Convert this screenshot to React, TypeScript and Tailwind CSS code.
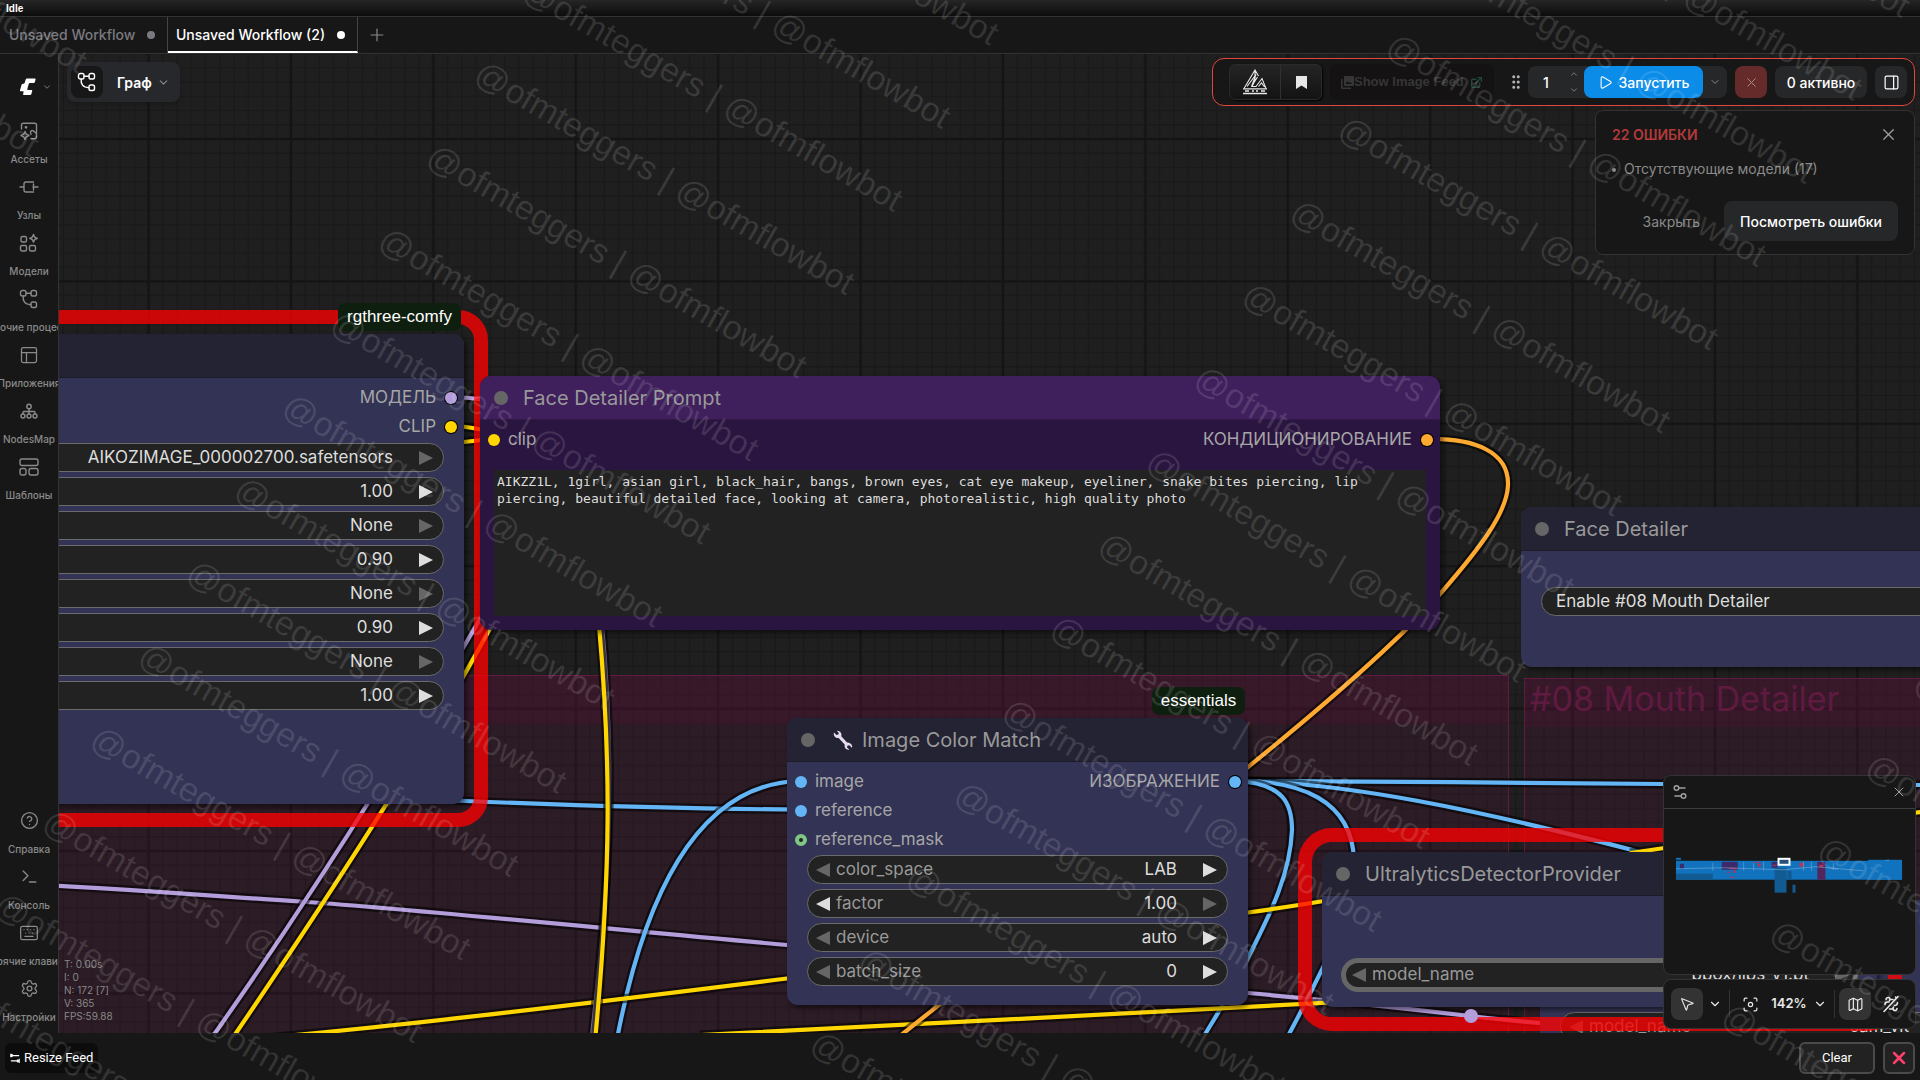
import React from "react";
import {
  ChevronDown,
  ChevronUp,
  X,
  Plus,
  Play,
  PanelsTopLeft,
  CircleQuestionMark,
  Terminal,
  Keyboard,
  Settings,
  PanelRight,
  Focus,
  Map as MapIcon,
  MousePointer2,
  GripVertical,
  ExternalLink,
} from "lucide-react";

type Side = "left" | "right";

const line = {
  fill: "none",
  stroke: "currentColor",
  strokeWidth: 1.4,
  strokeLinecap: "round" as const,
  strokeLinejoin: "round" as const,
};

/* ---------- icons ---------- */

const WorkflowIcon = () => (
  <svg viewBox="0 0 20 20" className="size-5" {...line}>
    <rect x="1.500" y="1.500" width="5.500" height="5.500" rx="1.800" />
    <rect x="12" y="1.500" width="5.500" height="5.500" rx="1.800" />
    <rect x="12" y="13" width="5.500" height="5.500" rx="1.800" />
    <path d="M7 4.200h5M4.200 7c-.6 5 1.500 8.500 7.800 8.700" />
  </svg>
);

const AssetsIcon = () => (
  <svg viewBox="0 0 20 20" className="size-5" {...line}>
    <path d="M2.500 8V4a1.800 1.800 0 0 1 1.800-1.800h11.400A1.800 1.800 0 0 1 17.500 4v12a1.800 1.800 0 0 1-1.800 1.800H12" />
    <path d="M12 13.500c-1.500-2.800.5-4.800 2.400-3.600l3 2.600" />
    <path d="M6 10.500l1.300 2.700L10 14.500l-2.700 1.300L6 18.500l-1.300-2.700L2 14.500l2.700-1.300z" />
    <circle cx="7" cy="6.300" r=".7" />
  </svg>
);

const NodesIcon = () => (
  <svg viewBox="0 0 20 20" className="size-5" {...line}>
    <path d="M1 10h4M14 10h5M5 10V7a2 2 0 0 1 2-2h7.500M5 10v3a2 2 0 0 0 2 2h7.500M14.500 7v6" />
  </svg>
);

const ModelsIcon = () => (
  <svg viewBox="0 0 20 20" className="size-5" {...line}>
    <rect x="2" y="3.500" width="5.500" height="5.500" rx="1.500" />
    <rect x="1.500" y="12.500" width="6" height="5.500" rx="1.500" />
    <rect x="10.500" y="12.500" width="6" height="5.500" rx="1.500" />
    <path d="M14.500 1.500l1.200 2.600 2.600 1.200-2.600 1.200-1.200 2.600-1.200-2.600-2.600-1.200 2.600-1.200z" />
  </svg>
);

const SitemapIcon = () => (
  <svg viewBox="0 0 20 20" className="size-5" {...line}>
    <circle cx="10" cy="5.500" r="2.200" />
    <circle cx="4" cy="15" r="2" />
    <circle cx="10" cy="15" r="2" />
    <circle cx="16" cy="15" r="2" />
    <path d="M10 7.700V13M4 13v-1.500a1 1 0 0 1 1-1h10a1 1 0 0 1 1 1V13" />
  </svg>
);

const TemplatesIcon = () => (
  <svg viewBox="0 0 20 20" className="size-5" {...line}>
    <rect x="1" y="2" width="18" height="6.500" rx="2" />
    <rect x="1" y="11.500" width="6" height="6.500" rx="2" />
    <rect x="10" y="11.500" width="9" height="6.500" rx="2" />
  </svg>
);

const LinkOffIcon = () => (
  <svg viewBox="0 0 20 20" className="size-5" {...line} strokeWidth={1.6}>
    <path d="M3 17.500L17 2.500" />
    <path d="M9 5.500h3M14.500 3l.4.400M5 5.500a2 2 0 1 1 3.500 1.300M4 10.500c0-1.800 1-2.500 2.500-2.500H8M16 14.500a2 2 0 1 1-3.500-1.300M16.500 8.500c0 2-1 3-3 3M12 15H8.500" />
  </svg>
);

const SlidersIcon = () => (
  <svg viewBox="0 0 16 16" className="size-4" {...line}>
    <circle cx="4.500" cy="4" r="2.300" />
    <circle cx="11.500" cy="12" r="2.300" />
    <path d="M7 4h6M9 12H3" />
  </svg>
);

const ImagesIcon = () => (
  <svg viewBox="0 0 13 13" className="size-[13px] shrink-0" fill="currentColor">
    <path d="M4 0h8q1 0 1 1v8q0 1-1 1H4q-1 0-1-1V1q0-1 1-1z" />
    <path d="M1.500 3v7.500q0 1 1 1H10V13H1.500Q0 13 0 11.500V3z" />
    <path d="M4.500 8l2-3 1.500 2 1-1 2 2z" fill="#141213" />
  </svg>
);

const ComfyLogo = () => (
  <svg viewBox="0 0 20 20" className="size-5" fill="#fff">
    <path d="M8.200 1.500h8.600q1 0 .8 1l-.7 2.500q-.3 1-1.300 1h-3.800q-.8 0-1 .8l-1.500 5.300q-.2.900.7.900h3.500q1 0 .7 1l-.8 3q-.3 1-1.300 1H5.800q-1 0-.7-1l.5-2q.2-.8-.6-.8H2.700q-1 0-.7-1l1.600-5.500q.3-1 1.300-1h.8q.7 0 .9-.7l1.100-3.500q.3-1 1.300-1z" />
  </svg>
);

const RgthreeLogo = () => (
  <svg viewBox="0 0 24 26" className="h-[26px] w-6" fill="none" stroke="#e8e8e8" strokeWidth="1.100">
    <path d="M1 19.500L12 1l3.500 6M4 17.500l9-12-4.500 12 6-9.500M12 2.500v9l-3 6h4l6-8 4 10M15.500 17.500l3-3.500 3 4" />
    <path d="M0 19.800h24M0 24.500h24" strokeWidth="1.300" />
    <path d="M2 22h4M9 22h2M13 22h2M18 22h4" strokeWidth="1.300" />
  </svg>
);

const WrenchIcon = () => (
  <svg viewBox="0 0 20 20" className="size-5" fill="#e6dcf0">
    <path d="M3.800.8c1.900-.3 4.600 1.200 4.700 3.900l-.2 1.500 5.800 6.300c1.900-.3 4.500 1 5 3.300.2.900.1 1.500-.2 2l-2.600-2.500-1.900.4-.4 1.800 2.400 2.100c-2 .4-4.400-.8-4.800-3.200l.1-1.800-6.100-6.500C3.500 8.300 1.300 7 .8 4.700c-.2-.9 0-1.600.2-2.100l2.500 2.300 1.900-.5.300-1.700z" />
  </svg>
);

/* ---------- canvas ---------- */

const YELLOW = "#ffd600";
const BLUE = "#64b5f6";
const PURPLE = "#b39ddb";
const ORANGE = "#ffa931";

const links: { d: string; color: string }[] = [
  { d: "M-60 880C60 884 200 895 300 901.500S640 932 787 945S1150 984 1248 993S1420 1010 1470 1016S1600 1028 1680 1032", color: PURPLE },
  { d: "M455 800.500C560 805 680 809 800 809.500", color: BLUE },
  { d: "M800 781C715 783 652 860 618 1034", color: BLUE },
  { d: "M1235 781C1400 781 1500 783 1663 784S1850 785 1930 785", color: BLUE },
  { d: "M1235 781C1340 781 1480 810 1640 852", color: BLUE },
  { d: "M1235 781C1300 780 1352 800 1354 860", color: BLUE },
  { d: "M1235 781C1285 783 1292 805 1292 830C1290 880 1264 925 1246 962S1222 1006 1204 1036", color: BLUE },
  { d: "M1345 920C1325 965 1310 995 1288 1036", color: BLUE },
  { d: "M1630 853C1720 840 1850 820 1930 811", color: YELLOW },
  { d: "M1910 912L1930 922", color: BLUE },
  { d: "M250 1039C400 1027 640 997 787 978.500L1248 912.500C1280 908 1300 905 1330 900", color: YELLOW },
  { d: "M700 1035C900 1026 1140 1012 1340 1002", color: YELLOW },
  { d: "M450 397C470 397 480 399 500 402", color: PURPLE },
  { d: "M450 425C470 427 480 429 500 433", color: YELLOW },
  { d: "M450 444C470 441 480 440 494 439", color: YELLOW },
  { d: "M602 625C614 760 612 860 592 1036", color: "#7d7090" },
  { d: "M599 625C611 760 611 870 595.500 1036", color: YELLOW },
  { d: "M500 584C440 690 330 870 213 1036", color: PURPLE },
  { d: "M510 590C450 710 340 880 234 1036", color: YELLOW },
  { d: "M1427 439C1475 438 1509 452 1508 485C1507 513 1480 548 1440 594C1390 650 1300 725 1248 767S1000 955 900 1036", color: ORANGE },
];

const CanvasGrid = () => (
  <svg className="absolute inset-0 size-full" aria-hidden="true">
    <defs>
      <pattern id="grid" x="148.600" y="139" width="142.400" height="142.400" patternUnits="userSpaceOnUse">
        {Array.from({ length: 9 }, (_, i) => (i + 1) * 14.24).map((p) => (
          <path key={p} d={`M${p} 0V142.400M0 ${p}H142.400`} stroke="#191919" strokeWidth="1.400" />
        ))}
        <path d="M0 0V142.400M142.400 0V142.400M0 0H142.400M0 142.400H142.400" stroke="#141414" strokeWidth="2.600" />
      </pattern>
    </defs>
    <rect width="100%" height="100%" fill="#1f1f1f" />
    <rect width="100%" height="100%" fill="url(#grid)" />
  </svg>
);

const LinkLayer = () => (
  <svg className="absolute inset-0 size-full" aria-hidden="true">
    {links.map((l) => (
      <g key={l.d} fill="none">
        <path d={l.d} stroke="#000" strokeOpacity=".55" strokeWidth="9" />
        <path d={l.d} stroke={l.color} strokeWidth="4.200" />
      </g>
    ))}
  </svg>
);

const Arrow = ({ side, dim, label }: { side: Side; dim?: boolean; label: string }) => (
  <button type="button" aria-label={label} className="shrink-0">
    <svg viewBox="0 0 14 14" className={dim ? "size-[14px] fill-[#666]" : "size-[14px] fill-[#ddd]"}>
      <path d={side === "left" ? "M14 0v14L0 7z" : "M0 0v14l14-7z"} />
    </svg>
  </button>
);

const Widget = ({
  name,
  value,
  dimLeft,
  dimRight,
  thick,
}: {
  name?: string;
  value: string;
  dimLeft?: boolean;
  dimRight?: boolean;
  thick?: boolean;
}) => (
  <div
    className={
      thick
        ? "flex h-[34px] items-center rounded-full border-[5px] border-[#666] bg-[#222] pr-1 pl-[6px]"
        : "flex h-[29px] items-center rounded-full border border-[#6b6b6b] bg-[#222] pr-[10px] pl-2"
    }
  >
    <Arrow side="left" dim={dimLeft} label={`Previous ${name ?? "value"}`} />
    <label className="flex min-w-0 flex-1 items-center pr-[26px] pl-[6px]">
      <span className="text-[#999]">{name}</span>
      <input
        aria-label={name ?? "lora"}
        defaultValue={value}
        className="w-0 min-w-0 flex-1 bg-transparent text-right text-[17px] text-[#ddd] outline-none"
      />
    </label>
    <Arrow side="right" dim={dimRight} label={`Next ${name ?? "value"}`} />
  </div>
);

const SlotRow = ({
  input,
  output,
  inColor,
  outColor,
}: {
  input?: string;
  output?: string;
  inColor?: string;
  outColor?: string;
}) => (
  <div className="flex h-7 items-center justify-between pr-[7px] pl-2 text-[#a6a6a6]">
    <span className="flex items-center gap-2">
      {input && <i className={`size-3 rounded-full ${inColor}`} />}
      {input}
    </span>
    {output && (
      <span className="flex items-center gap-[9px]">
        {output}
        <i className={`size-3 rounded-full ring-1 ring-black ${outColor}`} />
      </span>
    )}
  </div>
);

const NodeTitle = ({ children, className }: { children?: React.ReactNode; className: string }) => (
  <h2 className={`flex h-11 shrink-0 items-center gap-[15px] border-b border-black/20 pl-[14px] text-[20px] text-[#999] ${className}`}>
    <i className="size-[14px] rounded-full bg-[#666]" />
    {children}
  </h2>
);

const NODE = "absolute flex flex-col overflow-hidden rounded-[11px] text-[17px] shadow-[3px_3px_5px_rgba(0,0,0,0.5)]";

const loras: [string, boolean][] = [
  ["AIKOZIMAGE_000002700.safetensors", true],
  ["1.00", false],
  ["None", true],
  ["0.90", false],
  ["None", true],
  ["0.90", false],
  ["None", true],
  ["1.00", false],
];

const Badge = ({ children, className }: { children: string; className: string }) => (
  <span
    className={`absolute flex h-7 items-center justify-center rounded-[7px] bg-[#0f1f0f] font-['Liberation_Sans',sans-serif] text-[17px] whitespace-nowrap text-white ${className}`}
  >
    {children}
  </span>
);

const GraphCanvas = () => (
  <section aria-label="Graph" className="absolute inset-0 overflow-hidden">
    <CanvasGrid />

    <div className="absolute top-[675px] left-[-40px] h-[500px] w-[1549px] border border-[#641a40] bg-[#6a1040]/18">
      <div className="h-12 bg-[#6a1040]/20" />
    </div>
    <div className="absolute top-[678px] left-[1524px] h-[500px] w-[800px] border border-[#641a40] bg-[#6a1040]/18">
      <h3 className="h-12 bg-[#6a1040]/20 pl-[5px] text-[34px] leading-10 text-[#5f1a40]">#08 Mouth Detailer</h3>
    </div>

    <LinkLayer />

    <article className={`${NODE} top-[334px] left-[-200px] h-[470px] w-[664px] bg-[#333355]`}>
      <NodeTitle className="bg-[#242333]" />
      <div className="flex flex-col gap-px pt-[6px]">
        <SlotRow output="МОДЕЛЬ" outColor="bg-[#b39ddb]" />
        <SlotRow output="CLIP" outColor="bg-[#ffd600]" />
      </div>
      <div className="mx-5 mt-[2px] flex flex-col gap-[5px]">
        {loras.map(([v, dim], i) => (
          <Widget key={i} value={v} dimRight={dim} />
        ))}
      </div>
    </article>
    <div className="absolute top-[310px] left-[-240px] h-[517px] w-[728px] rounded-[30px] border-[14px] border-[#ff0000]/77" />
    <Badge className="top-[303px] left-[338px] w-[123px]">rgthree-comfy</Badge>

    <article className={`${NODE} top-[376px] left-[480px] h-[254px] w-[960px] bg-[#2a1540]`}>
      <NodeTitle className="bg-[#3f1f5c]">Face Detailer Prompt</NodeTitle>
      <div className="pt-[6px]">
        <SlotRow input="clip" inColor="bg-[#ffd600]" output="КОНДИЦИОНИРОВАНИЕ" outColor="bg-[#ffa931]" />
      </div>
      <textarea
        aria-label="Face Detailer Prompt"
        spellCheck={false}
        className="mx-[14px] mt-4 h-[146px] resize-none bg-[#222] px-[3px] py-[3px] font-['DejaVu_Sans_Mono',monospace] text-[13px] leading-[17px] text-[#ddd] outline-none"
        defaultValue="AIKZZ1L, 1girl, asian girl, black_hair, bangs, brown eyes, cat eye makeup, eyeliner, snake bites piercing, lip piercing, beautiful detailed face, looking at camera, photorealistic, high quality photo"
      />
    </article>

    <article className={`${NODE} top-[507px] left-[1521px] h-40 w-[600px] bg-[#333355]`}>
      <NodeTitle className="bg-[#242333]">Face Detailer</NodeTitle>
      <button
        type="button"
        className="mx-5 mt-9 flex h-[29px] items-center rounded-full border border-[#6b6b6b] bg-[#222] px-[14px] text-[#ddd]"
      >
        Enable #08 Mouth Detailer
      </button>
    </article>

    <Badge className="top-[687px] left-[1152px] w-[93px]">essentials</Badge>
    <article className={`${NODE} top-[718px] left-[787px] h-[287px] w-[461px] bg-[#333355]`}>
      <NodeTitle className="bg-[#242333]">
        <span className="flex items-center gap-[9px] pl-[3px]">
          <WrenchIcon />
          Image Color Match
        </span>
      </NodeTitle>
      <div className="flex flex-col gap-px pt-[6px]">
        <SlotRow input="image" inColor="bg-[#64b5f6]" output="ИЗОБРАЖЕНИЕ" outColor="bg-[#64b5f6]" />
        <SlotRow input="reference" inColor="bg-[#64b5f6]" />
        <SlotRow input="reference_mask" inColor="border-[4px] border-[#81c784] bg-[#222]" />
      </div>
      <div className="mx-5 mt-px flex flex-col gap-[5px]">
        <Widget name="color_space" value="LAB" dimLeft />
        <Widget name="factor" value="1.00" dimRight />
        <Widget name="device" value="auto" dimLeft />
        <Widget name="batch_size" value="0" dimLeft />
      </div>
    </article>

    <article className={`${NODE} top-[900px] left-[1540px] h-[300px] w-[440px] bg-[#333355]`}>
      <div className="mx-5 mt-28 flex flex-col">
        <Widget name="model_name" value="sam_vit" dimLeft />
      </div>
    </article>
    <div className="absolute top-[828px] left-[1298px] h-[203px] w-[604px] rounded-[34px] border-[14px] border-[#ff0000]/77" />
    <article className={`${NODE} top-[852px] left-[1322px] h-[155px] w-[555px] bg-[#333355]`}>
      <NodeTitle className="bg-[#242333]">UltralyticsDetectorProvider</NodeTitle>
      <div className="mx-[19px] mt-[62px]">
        <Widget name="model_name" value="bbox/lips_v1.pt" dimLeft dimRight thick />
      </div>
    </article>
    <i className="absolute top-[1009px] left-[1464px] size-[14px] rounded-full bg-[#b39ddb]" />
  </section>
);

/* ---------- chrome ---------- */

const SideItem = ({ icon, label }: { icon: React.ReactNode; label: string }) => (
  <button type="button" className="flex h-14 w-full flex-col items-center justify-between overflow-hidden py-[6px] text-[#8a8a8a]">
    {icon}
    <span className="text-[10px] leading-3 font-medium whitespace-nowrap">{label}</span>
  </button>
);

const Sidebar = () => (
  <nav className="relative flex w-[59px] shrink-0 flex-col overflow-hidden border-r border-[#333] bg-[#171717]">
    <button type="button" aria-label="Menu" className="mt-[17px] flex h-8 items-center gap-1 pl-[18px] text-[#8a8a8a]">
      <ComfyLogo />
      <ChevronDown size={10} />
    </button>
    <div className="mt-3 flex flex-col">
      <SideItem icon={<AssetsIcon />} label="Ассеты" />
      <SideItem icon={<NodesIcon />} label="Узлы" />
      <SideItem icon={<ModelsIcon />} label="Модели" />
      <SideItem icon={<WorkflowIcon />} label="Рабочие процессы" />
      <SideItem icon={<PanelsTopLeft size={20} strokeWidth={1.5} />} label="Приложения" />
      <SideItem icon={<SitemapIcon />} label="NodesMap" />
      <SideItem icon={<TemplatesIcon />} label="Шаблоны" />
    </div>
    <div className="mt-auto mb-1 flex flex-col">
      <SideItem icon={<CircleQuestionMark size={19} strokeWidth={1.7} />} label="Справка" />
      <SideItem icon={<Terminal size={19} strokeWidth={1.7} />} label="Консоль" />
      <SideItem icon={<Keyboard size={20} strokeWidth={1.5} />} label="Горячие клавиши" />
      <SideItem icon={<Settings size={19} strokeWidth={1.7} />} label="Настройки" />
    </div>
  </nav>
);

const ActionBar = () => (
  <div className="flex h-12 items-center rounded-xl border border-[#e0483f] bg-[#171717] pr-[7px] pl-4 text-[14px] text-white">
    <div className="flex h-9 overflow-hidden rounded-md border border-[#2a2a2a] bg-linear-to-b from-[#242424] to-[#131313] shadow-[1px_1px_2px_#000]">
      <button type="button" aria-label="rgthree" className="flex w-[51px] items-center justify-center border-r border-[#303030]">
        <RgthreeLogo />
      </button>
      <button type="button" aria-label="Bookmark" className="flex w-10 items-center justify-center">
        <svg viewBox="0 0 11 13" className="h-[13px] w-[11px] fill-[#e6e6e6]">
          <path d="M0 0h11v13L5.500 9.500 0 13z" />
        </svg>
      </button>
    </div>
    <button
      type="button"
      className="ml-2 flex h-9 w-[164px] items-center rounded-md bg-[#141213] pl-[11px] text-[13px] font-bold whitespace-nowrap text-[#363636] font-['Liberation_Sans',sans-serif]"
    >
      <ImagesIcon />
      Show Image Feed
      <ExternalLink size={13} strokeWidth={2.5} className="ml-[6px] text-[#1d4a3c]" />
    </button>
    <GripVertical size={18} className="mr-[3px] ml-[13px] text-[#b5b5b5]" />
    <div className="flex h-8 items-center rounded-lg bg-[#262729]">
      <input aria-label="Batch count" defaultValue="1" className="w-9 bg-transparent text-center font-medium outline-none" />
      <div className="flex w-5 flex-col items-center gap-[6px] text-[#8a8a8a]">
        <button type="button" aria-label="Increase">
          <ChevronUp size={10} />
        </button>
        <button type="button" aria-label="Decrease">
          <ChevronDown size={10} />
        </button>
      </div>
      <button type="button" className="flex h-8 w-[119px] items-center justify-center gap-[6px] rounded-lg bg-[#0b8ce9] font-medium">
        <Play size={15} strokeWidth={1.7} />
        Запустить
      </button>
      <button type="button" aria-label="Run options" className="flex h-8 w-6 items-center justify-center text-[#8a8a8a]">
        <ChevronDown size={12} />
      </button>
    </div>
    <button type="button" aria-label="Cancel" className="ml-2 flex size-8 items-center justify-center rounded-lg bg-[#652a2a] text-[#a58a8a]">
      <X size={15} strokeWidth={1.6} />
    </button>
    <button type="button" className="ml-2 h-8 w-[92px] rounded-lg bg-[#262729] text-center font-medium">
      0 активно
    </button>
    <button type="button" aria-label="Toggle panel" className="ml-2 flex size-8 items-center justify-center rounded-lg bg-[#262729]">
      <PanelRight size={17} strokeWidth={1.7} />
    </button>
  </div>
);

const ErrorPanel = () => (
  <section className="flex h-[145px] w-80 flex-col rounded-lg border border-[#333] bg-[#171717] px-4 pt-[15px] pb-[13px] text-[14px] text-[#8a8a8a]">
    <div className="flex h-4 items-center justify-between text-[#b33a3a]">
      <h2 className="font-semibold">22 ОШИБКИ</h2>
      <button type="button" aria-label="Close" className="text-[#a0a0a0]">
        <X size={19} strokeWidth={1.5} />
      </button>
    </div>
    <ul className="mt-4 flex h-5 items-center gap-2">
      <li className="flex items-center gap-2">
        <i className="mt-1 size-1 rounded-full bg-[#8a8a8a]" />
        Отсутствующие модели (17)
      </li>
    </ul>
    <div className="mt-auto flex items-center justify-end gap-6">
      <button type="button">Закрыть</button>
      <button type="button" className="h-10 rounded-lg bg-[#262729] px-4 font-medium text-white">
        Посмотреть ошибки
      </button>
    </div>
  </section>
);

const MiniMap = () => (
  <section aria-label="Minimap" className="flex h-[200px] flex-col rounded-lg border border-[#333] bg-[#171717] text-[#a0a0a0]">
    <div className="flex h-[33px] items-center justify-between border-b border-[#3c3c3c] pr-2 pl-2">
      <button type="button" aria-label="Minimap settings">
        <SlidersIcon />
      </button>
      <button type="button" aria-label="Close minimap">
        <X size={16} strokeWidth={1.5} />
      </button>
    </div>
    <svg viewBox="0 0 252 165" className="w-full">
      <g fill="#1172bd">
        <rect x="12" y="52" width="227" height="19" />
        <rect x="12" y="49" width="5" height="2" />
        <rect x="205" y="51" width="34" height="20" />
      </g>
      <g fill="#125a92">
        <rect x="12" y="65" width="37" height="6" />
        <rect x="111" y="59" width="12" height="25" />
        <rect x="124" y="62" width="4" height="9" />
        <rect x="129" y="76" width="3" height="8" />
      </g>
      <g fill="#3d2a6b">
        <rect x="58" y="53" width="16" height="8" />
        <rect x="16" y="55" width="4" height="5" />
        <rect x="108" y="53" width="6" height="6" />
        <rect x="154" y="53" width="8" height="18" fill="#54245c" />
      </g>
      <g fill="#b5365a">
        <rect x="65" y="59" width="8" height="1" />
        <rect x="63" y="63" width="4" height="1" />
        <rect x="70" y="61" width="2" height="3" />
        <rect x="66" y="68" width="5" height="1" />
        <rect x="91" y="53" width="6" height="1" />
        <rect x="94" y="55" width="3" height="3" />
        <rect x="109" y="56" width="4" height="1" />
        <rect x="136" y="54" width="4" height="4" />
        <rect x="156" y="56" width="4" height="2" />
      </g>
      <path d="M12 60L60 59L120 61L152 58L200 62" fill="none" stroke="#8ab8dc" strokeOpacity=".5" />
      <path d="M49 54v8M80 53v9M90 54v8M100 53v9M140 53v9M148 53v9M170 54v7M222 52l4-1" fill="none" stroke="#9fc4e2" strokeOpacity=".4" />
      <rect x="115" y="50" width="11" height="6" fill="#27507a" stroke="#fff" strokeWidth="2" />
    </svg>
  </section>
);

const ZoomBar = () => (
  <div className="flex h-[50px] items-center rounded-lg border border-[#333] bg-[#171717] pr-2 pl-[7px] text-[13px] text-[#e8e8e8]">
    <button type="button" aria-label="Select" className="flex size-8 items-center justify-center rounded-lg bg-[#333]">
      <MousePointer2 size={16} strokeWidth={1.7} />
    </button>
    <button type="button" aria-label="Tool options" className="flex w-6 justify-center">
      <ChevronDown size={14} />
    </button>
    <i className="mx-[2px] h-7 w-px bg-[#333]" />
    <button type="button" aria-label="Fit view" className="flex w-9 justify-center">
      <Focus size={17} strokeWidth={1.7} />
    </button>
    <button type="button" className="flex flex-1 items-center justify-center gap-[6px] font-semibold">
      142%
      <ChevronDown size={14} />
    </button>
    <i className="mx-1 h-7 w-px bg-[#333]" />
    <button type="button" aria-label="Toggle minimap" className="flex size-8 items-center justify-center rounded-lg bg-[#333]">
      <MapIcon size={17} strokeWidth={1.7} />
    </button>
    <button type="button" aria-label="Hide links" className="ml-1 flex size-8 items-center justify-center">
      <LinkOffIcon />
    </button>
  </div>
);

const Watermark = () => {
  const cells: { x: number; y: number }[] = [];
  for (let r = -11; r < 12; r++) {
    for (let c = -1; c < 4; c++) {
      const x = 449 + c * 775.5;
      const y = 25 + r * 96;
      const left = x * 0.866 - y * 0.5;
      const top = x * 0.5 + y * 0.866;
      if (left > -380 && left < 1930 && top > -230 && top < 1110) cells.push({ x, y });
    }
  }
  return (
    <svg className="pointer-events-none absolute inset-0 size-full" aria-hidden="true">
      <g transform="rotate(30)" fill="#fff" fillOpacity=".12" fontFamily="Liberation Sans, sans-serif" fontSize="34">
        {cells.map((p) => (
          <text key={`${p.x}-${p.y}`} x={p.x} y={p.y}>
            @ofmteggers | @ofmflowbot
          </text>
        ))}
      </g>
    </svg>
  );
};

export default function App() {
  return (
    <div className="relative flex h-screen flex-col overflow-hidden bg-[#1f1f1f] font-['Inter',sans-serif] text-white">
      <GraphCanvas />

      <div className="relative flex h-4 shrink-0 items-center bg-linear-to-b from-[#262626] to-[#0c0c0c] pt-px pl-[6px] text-[10px] font-bold font-['Liberation_Sans',sans-serif]">
        Idle
      </div>
      <header className="relative flex h-[38px] shrink-0 border-y border-[#333] bg-[#171717] text-[14px] font-medium">
        <button type="button" className="flex w-[168px] items-center justify-between border-r border-[#444] pr-3 pb-[2px] pl-[9px] text-[#7a7a80]">
          Unsaved Workflow
          <i className="mt-[2px] size-2 rounded-full bg-[#7a7a80]" />
        </button>
        <button type="button" className="flex w-[190px] items-center justify-between border-r border-b-2 border-r-[#444] border-b-white pr-3 pl-2">
          Unsaved Workflow (2)
          <i className="mt-[2px] size-2 rounded-full bg-white" />
        </button>
        <button type="button" aria-label="New workflow" className="px-[9px] text-[#8a8a8a]">
          <Plus size={20} strokeWidth={1.4} />
        </button>
      </header>

      <div className="flex min-h-0 flex-1">
        <Sidebar />
        <div className="relative flex min-w-0 flex-1 flex-col justify-between">
          <div className="flex items-start justify-between">
            <div className="mt-2 ml-2 flex h-10 items-center gap-[14px] rounded-lg bg-[#27282b] pr-[10px] pl-1 shadow-md">
              <button type="button" aria-label="Workflow view" className="flex size-8 items-center justify-center rounded-lg bg-[#171717]">
                <WorkflowIcon />
              </button>
              <button type="button" className="flex items-center gap-[5px] text-[14px] font-semibold">
                Граф
                <ChevronDown size={13} className="text-[#8a8a8a]" />
              </button>
            </div>
            <div className="mt-1 mr-[5px] flex flex-col items-end gap-1">
              <ActionBar />
              <ErrorPanel />
            </div>
          </div>
          <div className="flex items-end justify-between">
            <pre className="mb-[10px] pl-[5px] font-['Inter',sans-serif] text-[10px] leading-[13px] text-[#888]">
              {"T: 0.00s\nI: 0\nN: 172 [7]\nV: 365\nFPS:59.88"}
            </pre>
            <div className="mr-1 mb-1 flex w-[253px] flex-col gap-1">
              <MiniMap />
              <ZoomBar />
            </div>
          </div>
        </div>
      </div>

      <footer className="relative flex h-[47px] shrink-0 items-center justify-between bg-[#171717] px-[5px] pt-[2px] font-['Roboto',sans-serif] text-[13px]">
        <button type="button" className="flex h-[30px] items-center gap-1 rounded-md bg-[#0c0c0c] px-[5px]">
          <svg viewBox="0 0 12 12" className="size-[10px]" fill="none" stroke="#fff" strokeWidth="1.500">
            <path d="M1 1v4M1 3h10M3 1.500L1.500 3L3 4.500M11 7v5M1 9.500h9M8.500 8l1.500 1.500L8.500 11" />
          </svg>
          Resize Feed
        </button>
        <div className="flex gap-2">
          <button type="button" className="h-8 w-[76px] rounded-md border-2 border-[#4a4a4a] bg-[#222]">
            Clear
          </button>
          <button type="button" aria-label="Close feed" className="flex size-8 items-center justify-center rounded-md border-2 border-[#4a4a4a] bg-[#222] text-[#ff3f6c]">
            <X size={20} strokeWidth={3} />
          </button>
        </div>
      </footer>
      <Watermark />
    </div>
  );
}
